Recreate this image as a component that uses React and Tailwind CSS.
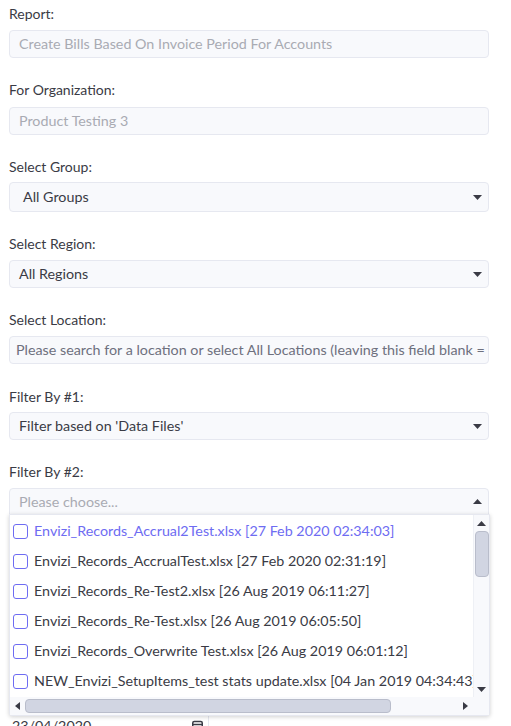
import React from "react";

const font = { fontFamily: "Lato, 'Open Sans', sans-serif" };

function Caret({ up }) {
  return (
    <svg width="9" height="5" viewBox="0 0 9 5" className="shrink-0">
      {up ? <path d="M0 5 L4.5 0 L9 5 Z" fill="#3a3b45" /> : <path d="M0 0 L4.5 5 L9 0 Z" fill="#3a3b45" />}
    </svg>
  );
}

const files = [
  "Envizi_Records_Accrual2Test.xlsx [27 Feb 2020 02:34:03]",
  "Envizi_Records_AccrualTest.xlsx [27 Feb 2020 02:31:19]",
  "Envizi_Records_Re-Test2.xlsx [26 Aug 2019 06:11:27]",
  "Envizi_Records_Re-Test.xlsx [26 Aug 2019 06:05:50]",
  "Envizi_Records_Overwrite Test.xlsx [26 Aug 2019 06:01:12]",
  "NEW_Envizi_SetupItems_test stats update.xlsx [04 Jan 2019 04:34:43]",
];

export default function App() {
  return (
    <div className="w-[511px] h-[726px] overflow-hidden bg-white text-[14.3px] text-[#3a3b45]" style={font}>
      <div className="pl-[9px] pr-[22px] pt-[4px]">
        <div className="h-[20px] leading-[20px] text-[14px]">Report:</div>
        <div className="mt-[6px] h-[28px] rounded-[4px] border border-[#e6e8f0] bg-[#f8f9fc] pl-[9px] flex items-center text-[#a9abb3] whitespace-nowrap overflow-hidden">
          Create Bills Based On Invoice Period For Accounts
        </div>

        <div className="mt-[22px] h-[20px] leading-[20px] text-[14px]">For Organization:</div>
        <div className="mt-[7px] h-[28px] rounded-[4px] border border-[#e6e8f0] bg-[#f8f9fc] pl-[9px] flex items-center text-[#a9abb3]">
          Product Testing 3
        </div>

        <div className="mt-[22px] h-[20px] leading-[20px] text-[14px]">Select Group:</div>
        <div className="mt-[5px] h-[30px] rounded-[4px] border border-[#e6e8f0] bg-[#f8f9fc] pl-[13px] pr-[6px] flex items-center justify-between text-[#3a3b45]">
          <span>All Groups</span>
          <Caret />
        </div>

        <div className="mt-[22px] h-[20px] leading-[20px] text-[14px]">Select Region:</div>
        <div className="mt-[6px] h-[28px] rounded-[4px] border border-[#e6e8f0] bg-[#f8f9fc] pl-[9px] pr-[6px] flex items-center justify-between text-[#3a3b45]">
          <span>All Regions</span>
          <Caret />
        </div>

        <div className="mt-[22px] h-[20px] leading-[20px] text-[14px]">Select Location:</div>
        <div className="mt-[6px] h-[28px] rounded-[4px] border border-[#e6e8f0] bg-[#f8f9fc] pl-[6px] flex items-center text-[#6e707e] whitespace-nowrap overflow-hidden">
          Please search for a location or select All Locations (leaving this field blank = all locations)
        </div>

        <div className="mt-[23px] h-[20px] leading-[20px] text-[14px]">Filter By #1:</div>
        <div className="mt-[5px] h-[28px] rounded-[4px] border border-[#e6e8f0] bg-[#f8f9fc] pl-[9px] pr-[6px] flex items-center justify-between text-[#3a3b45]">
          <span>Filter based on 'Data Files'</span>
          <Caret />
        </div>

        <div className="mt-[22px] h-[20px] leading-[20px] text-[14px]">Filter By #2:</div>
        <div className="relative mt-[6px]">
          <div className="h-[27px] rounded-t-[4px] border border-[#e6e8f0] bg-[#f8f9fc] pl-[9px] pr-[6px] flex items-center justify-between text-[#a9abb3]">
            <span>Please choose...</span>
            <Caret up />
          </div>
          <div className="absolute left-0 top-[26px] z-10 w-[481px] h-[202px] bg-white border border-[#e6e8f0] rounded-b-[3px] shadow-[0_1px_4px_rgba(0,0,0,0.18)] flex flex-col">
            <div className="flex flex-1 min-h-0">
              <div className="flex-1 min-w-0 overflow-hidden pt-[1px]">
                {files.map((f, i) => (
                  <div key={f} className={`h-[30px] flex items-center pl-[3px] whitespace-nowrap ${i === 0 ? "text-[#6e6cf2]" : "text-[#3a3b45]"}`}>
                    <span className="w-[15px] h-[15px] shrink-0 rounded-[3px] border-[1.3px] border-[#6e6cf2] bg-white mr-[6px]" />
                    <span>{f}</span>
                  </div>
                ))}
              </div>
              <div className="w-[16px] shrink-0 bg-[#f8f9fc] border-l border-[#eef0f5] flex flex-col items-center">
                <div className="h-[16px] flex items-center justify-center"><Caret up /></div>
                <div className="w-[14px] h-[46px] rounded-[4px] bg-[#d1d5e2] border border-[#b9bdcb]" />
                <div className="flex-1" />
                <div className="h-[16px] flex items-center justify-center"><Caret /></div>
              </div>
            </div>
            <div className="h-[18px] flex shrink-0">
              <div className="flex-1 bg-[#f8f9fc] flex items-center pl-[5px] pr-[5px] gap-[5px]">
                <svg width="5" height="8" viewBox="0 0 5 8"><path d="M5 0 L0 4 L5 8 Z" fill="#3a3b45" /></svg>
                <div className="w-[366px] h-[14px] rounded-[4px] bg-[#d1d5e2] border border-[#b9bdcb]" />
                <div className="flex-1" />
                <svg width="5" height="8" viewBox="0 0 5 8"><path d="M0 0 L5 4 L0 8 Z" fill="#3a3b45" /></svg>
              </div>
              <div className="w-[16px] bg-[#f8f9fc]" />
            </div>
          </div>
        </div>

        <div className="mt-[196px] w-[200px] h-[30px] border-r border-[#e6e8f0] flex items-center justify-between pl-[3px] pr-[5px] text-[#3a3b45]">
          <span>23/04/2020</span>
          <svg width="11" height="12" viewBox="0 0 11 12"><rect x="0.75" y="1.5" width="9.5" height="9.75" rx="1.5" fill="none" stroke="#3a3b45" strokeWidth="1.5" /><line x1="0.75" y1="4.5" x2="10.25" y2="4.5" stroke="#3a3b45" strokeWidth="1.5" /></svg>
        </div>
      </div>
    </div>
  );
}
